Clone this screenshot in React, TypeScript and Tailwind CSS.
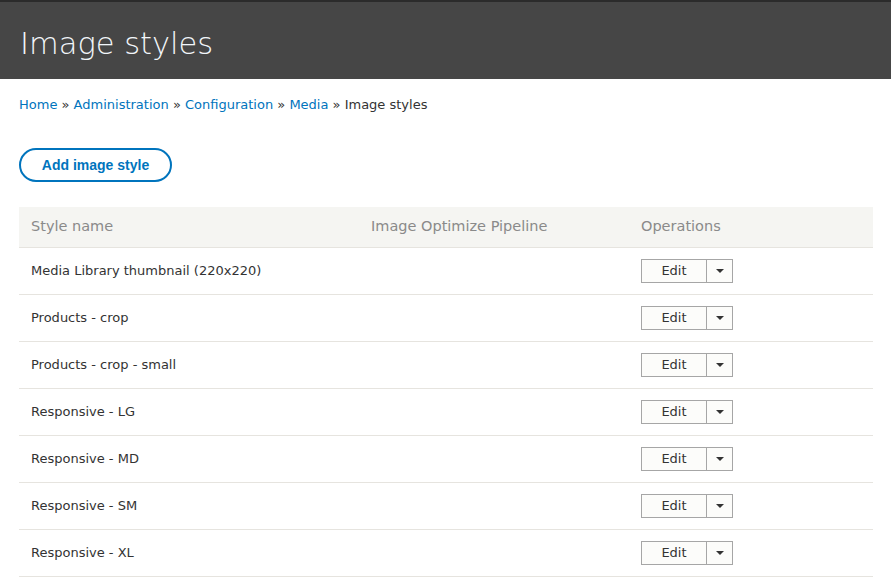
import React from 'react';

const rows = [
  'Media Library thumbnail (220x220)',
  'Products - crop',
  'Products - crop - small',
  'Responsive - LG',
  'Responsive - MD',
  'Responsive - SM',
  'Responsive - XL',
];

function EditButton() {
  return (
    <div className="flex h-[24px] w-[92px] border border-[#a6a6a6] bg-[#fcfcfa]">
      <button className="flex-1 text-[13px] text-[#333] leading-none">Edit</button>
      <div className="w-[26px] border-l border-[#a6a6a6] flex items-center justify-center">
        <span className="block w-0 h-0 border-l-[4px] border-r-[4px] border-t-[4px] border-l-transparent border-r-transparent border-t-[#333]" />
      </div>
    </div>
  );
}

export default function App() {
  return (
    <div className="min-h-[582px] bg-white font-['DejaVu_Sans',sans-serif]">
      <div className="h-[79px] bg-[#464646] border-t-2 border-[#2b2b2b] px-[20px] pt-[22px]">
        <h1 className="text-[30.5px] font-light text-[#f2f6fa] leading-[40px]">Image styles</h1>
      </div>

      <div className="px-[19px]">
        <div className="mt-[18px] text-[13px] leading-[16px] text-[#333]">
          <a className="text-[#0074bd]">Home</a> » <a className="text-[#0074bd]">Administration</a> »{' '}
          <a className="text-[#0074bd]">Configuration</a> » <a className="text-[#0074bd]">Media</a> » Image styles
        </div>

        <button className="block mt-[35px] h-[34px] w-[153px] rounded-full border-2 border-[#0074bd] text-[#0074bd] text-[14px] font-bold font-['Liberation_Sans',sans-serif]">
          Add image style
        </button>

        <table className="mt-[25px] w-[854px] border-collapse text-left">
          <thead>
            <tr className="bg-[#f5f5f2] h-[40px] border-b border-[#e6e4df]">
              <th className="pl-[12px] w-[340px] font-normal text-[14.5px] text-[#8a8a8a]">Style name</th>
              <th className="pl-[12px] w-[270px] font-normal text-[14.5px] text-[#8a8a8a]">Image Optimize Pipeline</th>
              <th className="pl-[12px] font-normal text-[14.5px] text-[#8a8a8a]">Operations</th>
            </tr>
          </thead>
          <tbody>
            {rows.map((r) => (
              <tr key={r} className="h-[47px] border-b border-[#e6e4df]">
                <td className="pl-[12px] text-[13px] text-[#333]">{r}</td>
                <td />
                <td className="pl-[12px]">
                  <EditButton />
                </td>
              </tr>
            ))}
          </tbody>
        </table>
      </div>
    </div>
  );
}
